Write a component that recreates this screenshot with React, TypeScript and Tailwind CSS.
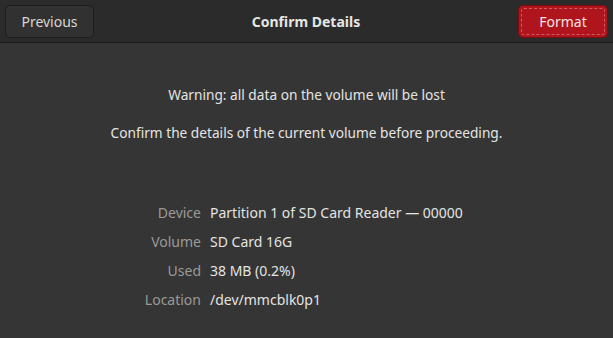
import React from 'react';

const rows: [string, string][] = [
    ['Device', 'Partition 1 of SD Card Reader — 00000'],
    ['Volume', 'SD Card 16G'],
    ['Used', '38 MB (0.2%)'],
    ['Location', '/dev/mmcblk0p1'],
];

const App: React.FC = () => {
    return (
        <div className="w-[613px] h-[338px] bg-[#353535] text-[#eeeeec] flex flex-col overflow-hidden" style={{ fontFamily: '"Noto Sans", "Open Sans", sans-serif' }}>
            {/* Header bar */}
            <div className="h-[43px] bg-[#2b2b2b] border-b border-[#1b1b1b] flex items-center justify-between px-[5px] shrink-0">
                <button className="w-[89px] h-[33px] rounded-[5px] bg-[#313131] border border-[#1c1c1c] text-[14px] text-[#d6d6d4]">
                    Previous
                </button>
                <div className="text-[14px] font-bold text-[#e6e6e4]">Confirm Details</div>
                <div className="w-[90px] h-[33px] rounded-[5px] bg-[#b0151e] border border-[#7a0b10] p-[2px]">
                    <button className="w-full h-full rounded-[3px] border border-dashed border-[#e8a0a4]/50 text-[14px] text-[#f4e4e4] flex items-center justify-center">
                        Format
                    </button>
                </div>
            </div>

            {/* Body */}
            <div className="flex flex-col items-center pt-[42px] text-[13.7px]">
                <p className="text-[#e4e4e2] leading-[20px]">Warning: all data on the volume will be lost</p>
                <p className="text-[#e4e4e2] leading-[20px] mt-[18px]">Confirm the details of the current volume before proceeding.</p>
            </div>

            <div className="grid grid-cols-[201px_1fr] gap-x-[9px] gap-y-[9px] mt-[60px] text-[14px] leading-[20px]">
                {rows.map(([label, value]) => (
                    <React.Fragment key={label}>
                        <span className="text-right text-[#9a9a98]">{label}</span>
                        <span className="text-[#e4e4e2]">{value}</span>
                    </React.Fragment>
                ))}
            </div>
        </div>
    );
};

export default App;
